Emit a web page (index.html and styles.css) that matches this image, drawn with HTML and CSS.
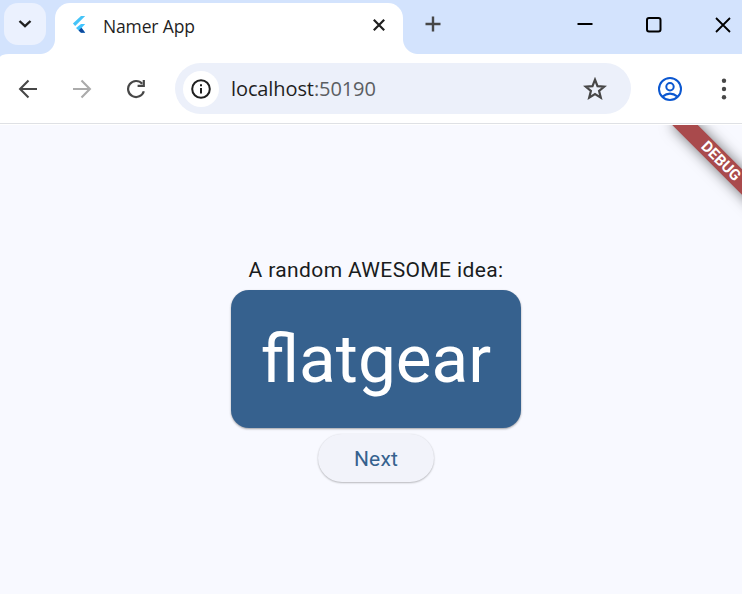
FILE: index.html
```html
<!DOCTYPE html>
<html lang="en">
<head>
<meta charset="utf-8">
<title>Namer App</title>
<link rel="stylesheet" href="styles.css">
</head>
<body>
<header class="tabstrip">
  <button class="tab-search" aria-label="Search tabs"><svg width="14" height="8" viewBox="0 0 14 8"><path d="M1.5 1 7 6.2 12.5 1" fill="none" stroke="#1f1f1f" stroke-width="2.4"/></svg></button>
  <div class="tab">
    <svg class="favicon" width="14" height="20" viewBox="0 0 14 20"><path d="M9 1H13.2L3.2 11 .9 8.6Z" fill="#45c4f8"/><path d="M9 9H13.2L9.7 12.7 13.2 17.8H9L4 12.9Z" fill="#40c4ff"/><path d="M6.6 15.4 9.4 12.7 13.2 17.8H9Z" fill="#10479b"/></svg>
    <span class="tab-title">Namer App</span>
    <svg class="tab-close" width="12" height="12" viewBox="0 0 12 12"><path d="M.8.8 11.2 11.2M11.2.8.8 11.2" stroke="#1f1f1f" stroke-width="2.2"/></svg>
  </div>
  <svg class="new-tab" width="16" height="16" viewBox="0 0 16 16"><path d="M8 .5V15.5M.5 8H15.5" stroke="#474747" stroke-width="2.4"/></svg>
  <div class="window-controls">
    <svg width="16" height="16" viewBox="0 0 16 16"><path d="M.5 7H15.5" stroke="#000" stroke-width="2"/></svg>
    <svg width="16" height="16" viewBox="0 0 16 16"><rect x="1" y="1" width="13.5" height="13.5" rx="2" fill="none" stroke="#000" stroke-width="2"/></svg>
    <svg width="16" height="16" viewBox="0 0 16 16"><path d="M1 1 15 15M15 1 1 15" stroke="#000" stroke-width="1.8"/></svg>
  </div>
</header>
<nav class="toolbar">
  <svg class="back" width="20" height="20" viewBox="0 0 20 20"><path d="M19 10H2.5M10.5 1.6 2.1 10 10.5 18.4" fill="none" stroke="#474747" stroke-width="2.1"/></svg>
  <svg class="forward" width="20" height="20" viewBox="0 0 20 20"><path d="M1 10H17.5M9.5 1.6 17.9 10 9.5 18.4" fill="none" stroke="#ababab" stroke-width="2.1"/></svg>
  <svg class="reload" width="20" height="20" viewBox="0 0 20 20"><path d="M16.2 4.8A8 8 0 1 0 17.8 12.2" fill="none" stroke="#474747" stroke-width="2.2"/><path d="M18.9 1V8H11.6V5.8H16.7V1Z" fill="#474747"/></svg>
  <div class="address">
    <span class="site-info"><svg width="20" height="20" viewBox="0 0 20 20"><circle cx="10" cy="10" r="8.8" fill="none" stroke="#1f1f1f" stroke-width="2"/><path d="M9 9H11V14.6H9ZM9 5.3H11V7.3H9Z" fill="#1f1f1f"/></svg></span>
    <span class="url">localhost<span class="port">:50190</span></span>
    <svg class="star" width="24" height="24" viewBox="0 0 24 24"><path d="M12 2.7 14.5 9.1 21.4 9.6 16.1 14 17.8 20.7 12 17.1 6.2 20.7 7.9 14 2.6 9.6 9.5 9.1Z" fill="none" stroke="#474747" stroke-width="2.2"/></svg>
  </div>
  <svg class="profile" width="24" height="24" viewBox="0 0 24 24"><g fill="none" stroke="#0b57d0" stroke-width="2"><circle cx="12" cy="12" r="11"/><circle cx="12" cy="9.8" r="3.7"/><path d="M4.5 19.6Q12 13.7 19.5 19.6"/></g></svg>
  <svg class="menu" width="6" height="22" viewBox="0 0 6 22"><g fill="#474747"><circle cx="3" cy="2.8" r="2.2"/><circle cx="3" cy="11" r="2.2"/><circle cx="3" cy="19.2" r="2.2"/></g></svg>
</nav>
<main class="app">
  <p class="caption">A random AWESOME idea:</p>
  <div class="card">flatgear</div>
  <button class="next">Next</button>
  <div class="banner">DEBUG</div>
</main>
</body>
</html>
```

FILE: styles.css
```css
* { box-sizing: border-box; }
body {
  margin: 0;
  width: 742px;
  height: 594px;
  overflow: hidden;
  display: flex;
  flex-direction: column;
  background: #d3e3fd;
  font-family: Roboto, sans-serif;
}
svg { display: block; flex: none; }
button { border: 0; padding: 0; font: inherit; }

.tabstrip {
  height: 54px;
  flex: none;
  display: flex;
  align-items: flex-start;
  background: #d3e3fd;
}
.tab-search {
  width: 42px;
  height: 42px;
  margin: 3px 9px 0 4px;
  border-radius: 14px;
  background: #ebf1fe;
  display: flex;
  align-items: center;
  justify-content: center;
}
.tab {
  position: relative;
  width: 348px;
  height: 51px;
  margin-top: 3px;
  padding: 0 18px 8px 17px;
  display: flex;
  align-items: center;
  background: #fff;
  border-radius: 15px 15px 0 0;
}
.tab::before,
.tab::after {
  content: "";
  position: absolute;
  bottom: 0;
  width: 15px;
  height: 15px;
}
.tab::before { right: 100%; background: radial-gradient(circle at 0 0, transparent 14.5px, #fff 15.5px); }
.tab::after { left: 100%; background: radial-gradient(circle at 100% 0, transparent 14.5px, #fff 15.5px); }
.favicon { margin-top: 1px; }
.tab-title {
  margin: 2px auto 0 17px;
  font: 17.5px/24px "Open Sans", sans-serif;
  letter-spacing: -0.15px;
  color: #1f1f1f;
}
.new-tab { margin: 16px 0 0 22px; }
.window-controls {
  margin: 17px 11px 0 auto;
  display: flex;
  gap: 53px;
}

.toolbar {
  height: 71px;
  flex: none;
  display: flex;
  align-items: center;
  padding: 0 0 1px 18px;
  border-bottom: 1px solid #fff;
  border-top-left-radius: 9px 3px;
  background: #fff;
  box-shadow: inset 0 -1px #dfe1e5;
}
.forward { margin-left: 34px; }
.reload { margin-left: 34px; }
.address {
  width: 456px;
  height: 51px;
  margin-left: 29px;
  padding: 0 24px 0 8px;
  display: flex;
  align-items: center;
  border-radius: 26px;
  background: #ecf0fa;
}
.site-info {
  width: 36px;
  height: 36px;
  display: flex;
  align-items: center;
  justify-content: center;
  border-radius: 50%;
  background: #fff;
}
.url {
  margin: 0 auto 0 12px;
  font: 20px/28px "Open Sans", sans-serif;
  letter-spacing: -0.1px;
  color: #1f1f1f;
}
.port { color: #5b5e62; }
.profile { margin-left: 27px; }
.menu { margin-left: 39px; }

.app {
  position: relative;
  flex: 1;
  overflow: hidden;
  padding: 133px 0 0 10px;
  display: flex;
  flex-direction: column;
  align-items: center;
  background: #f8f9ff;
}
.caption {
  margin: 0;
  height: 32px;
  font-size: 21px;
  line-height: 25px;
  letter-spacing: 0.375px;
  color: #191c20;
}
.card {
  width: 290px;
  height: 138px;
  border-radius: 18px;
  background: #36618e;
  color: #fff;
  font-size: 67.5px;
  line-height: 138px;
  text-align: center;
  box-shadow: 0 1px 2px rgba(0, 0, 0, 0.28), 0 1px 3px rgba(0, 0, 0, 0.1);
}
.next {
  width: 116px;
  height: 48px;
  margin-top: 6px;
  padding-top: 2px;
  border-radius: 24px;
  background: #f2f3fa;
  color: #36618e;
  font-size: 21px;
  letter-spacing: 0.15px;
  box-shadow: 0 1px 2px rgba(0, 0, 0, 0.25), 0 0 2px rgba(0, 0, 0, 0.06);
}
.banner {
  position: absolute;
  left: 661px;
  top: 27px;
  width: 120px;
  height: 18px;
  background: #a94a4c;
  color: #fff;
  font-size: 15.3px;
  font-weight: 700;
  line-height: 18px;
  text-align: center;
  transform: rotate(45deg);
  box-shadow: 0 0 14px rgba(0, 0, 0, 0.55);
}
```
